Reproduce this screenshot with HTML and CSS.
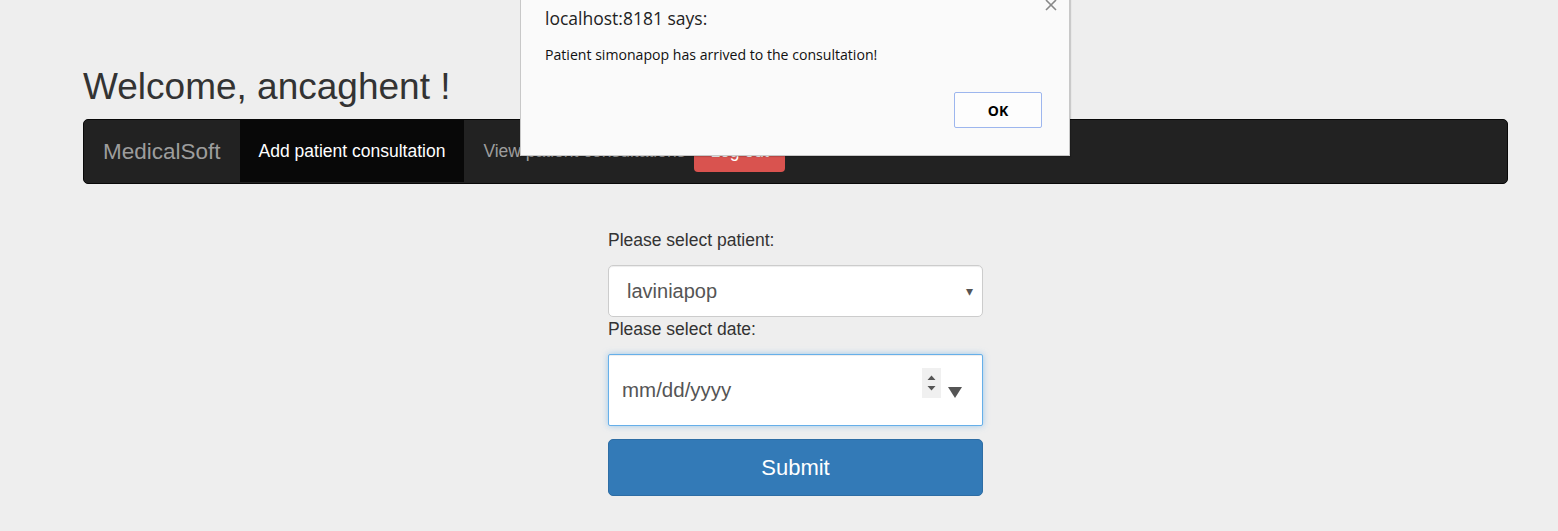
FILE: index.html
```html
<!DOCTYPE html>
<html>
<head>
<meta charset="utf-8">
<title>MedicalSoft</title>
<link rel="stylesheet" href="styles.css">
</head>
<body>
<div class="page">
  <h1 class="welcome">Welcome, ancaghent !</h1>
  <nav class="navbar">
    <a class="brand">MedicalSoft</a>
    <ul class="nav">
      <li class="nav-item active">Add patient consultation</li>
      <li class="nav-item">View patient consultations</li>
      <li class="nav-btn"><span class="btn-danger">Log out</span></li>
    </ul>
  </nav>
  <form class="form">
    <label class="label">Please select patient:</label>
    <div class="select"><span>laviniapop</span><span class="caret">▾</span></div>
    <label class="label label-date">Please select date:</label>
    <div class="date-input">
      <span class="date-text">mm/dd/yyyy</span>
      <span class="spin">
        <svg width="19" height="30" viewBox="0 0 19 30"><path d="M5.5 12 L9.5 7.5 L13.5 12 Z M5.5 18 L9.5 22.5 L13.5 18 Z" fill="#555"/></svg>
      </span>
      <svg class="drop" width="16" height="12" viewBox="0 0 16 12"><path d="M1 1 H15 L8 12 Z" fill="#555"/></svg>
    </div>
    <button type="button" class="submit">Submit</button>
  </form>
</div>
<div class="dialog">
  <svg class="close" width="12" height="12" viewBox="0 0 12 12"><path d="M1 1 L11 11 M11 1 L1 11" stroke="#888" stroke-width="1.6"/></svg>
  <div class="dialog-title">localhost:8181 says:</div>
  <div class="dialog-msg">Patient simonapop has arrived to the consultation!</div>
  <div class="dialog-actions"><span class="ok">OK</span></div>
</div>
</body>
</html>
```

FILE: styles.css
```css
html, body {
  margin: 0;
  padding: 0;
  background: #eeeeee;
  font-family: "Liberation Sans", Arial, sans-serif;
  color: #333;
}
.page {
  padding: 65px 50px 0 83px;
}
.welcome {
  margin: 0 0 10px 0;
  font-size: 37px;
  line-height: 44px;
  font-weight: normal;
  color: #333;
}
.navbar {
  display: flex;
  align-items: stretch;
  height: 63px;
  background: #222;
  border: 1px solid #080808;
  border-radius: 5px;
}
.brand {
  padding: 0 19px 0 19px;
  font-size: 22.5px;
  line-height: 63px;
  color: #9d9d9d;
}
.nav {
  display: flex;
  margin: 0;
  padding: 0;
  list-style: none;
}
.nav-item {
  padding: 0 19px;
  font-size: 17.5px;
  line-height: 62px;
  color: #9d9d9d;
  white-space: nowrap;
}
.nav-item.active {
  background: #080808;
  color: #fff;
  margin-bottom: 1px;
}
.nav-btn {
  display: flex;
  align-items: center;
  margin-left: -10px;
}
.btn-danger {
  display: block;
  margin-top: -2px;
  padding: 0 16px;
  height: 42px;
  line-height: 42px;
  font-size: 17.5px;
  color: #fff;
  background: #d9534f;
  border-radius: 4px;
}
.form {
  width: 375px;
  margin: 44px auto 0;
  display: flex;
  flex-direction: column;
}
.label {
  font-size: 17.5px;
  line-height: 25px;
  margin-bottom: 12px;
  color: #333;
}
.label-date {
  margin-bottom: 12px;
  line-height: 25px;
}
.select {
  height: 50px;
  border: 1px solid #ccc;
  border-radius: 5px;
  background: #fff;
  display: flex;
  align-items: center;
  justify-content: space-between;
  padding: 0 9px 0 18px;
  font-size: 20px;
  color: #555;
  box-shadow: inset 0 1px 1px rgba(0,0,0,.075);
}
.caret {
  font-size: 14px;
  color: #555;
}
.date-input {
  height: 70px;
  border: 1px solid #66afe9;
  border-radius: 2px;
  background: #fff;
  box-shadow: inset 0 1px 1px rgba(0,0,0,.075), 0 0 6px rgba(102,175,233,.6);
  display: flex;
  align-items: center;
  padding: 0 19px 0 13px;
  font-size: 20.5px;
  color: #555;
}
.date-text {
  flex: 1;
}
.spin {
  display: block;
  align-self: flex-start;
  margin-top: 13px;
  width: 19px;
  height: 30px;
  background: #f0f0f0;
  margin-right: 6px;
}
.spin svg, .drop { display: block; }
.drop { margin-top: 3px; }
.submit {
  margin-top: 13px;
  height: 57px;
  border: 1px solid #2e6da4;
  border-radius: 5px;
  background: #337ab7;
  color: #fff;
  font-family: "Liberation Sans", Arial, sans-serif;
  font-size: 22px;
}
.dialog {
  position: absolute;
  left: 520px;
  top: -2px;
  width: 548px;
  height: 157px;
  background: #fafafa;
  border: 1px solid #c8c8c8;
  border-top: none;
  box-shadow: 1px 1px 1px rgba(0,0,0,.15);
  font-family: "Open Sans", "Noto Sans", sans-serif;
  color: #222;
}
.close {
  position: absolute;
  right: 12px;
  top: 1px;
}
.dialog-title {
  margin: 7px 0 0 24px;
  font-size: 17.5px;
  line-height: 26px;
}
.dialog-msg {
  margin: 14px 0 0 24px;
  font-size: 14.1px;
  line-height: 20px;
  color: #111;
}
.dialog-actions {
  display: flex;
  justify-content: flex-end;
  margin: 27px 27px 0 0;
}
.ok {
  width: 86px;
  height: 34px;
  border: 1px solid #9db6ee;
  border-radius: 2px;
  background: #fdfdfd;
  display: flex;
  align-items: center;
  justify-content: center;
  font-weight: bold;
  font-size: 14px;
  color: #000;
}
```
